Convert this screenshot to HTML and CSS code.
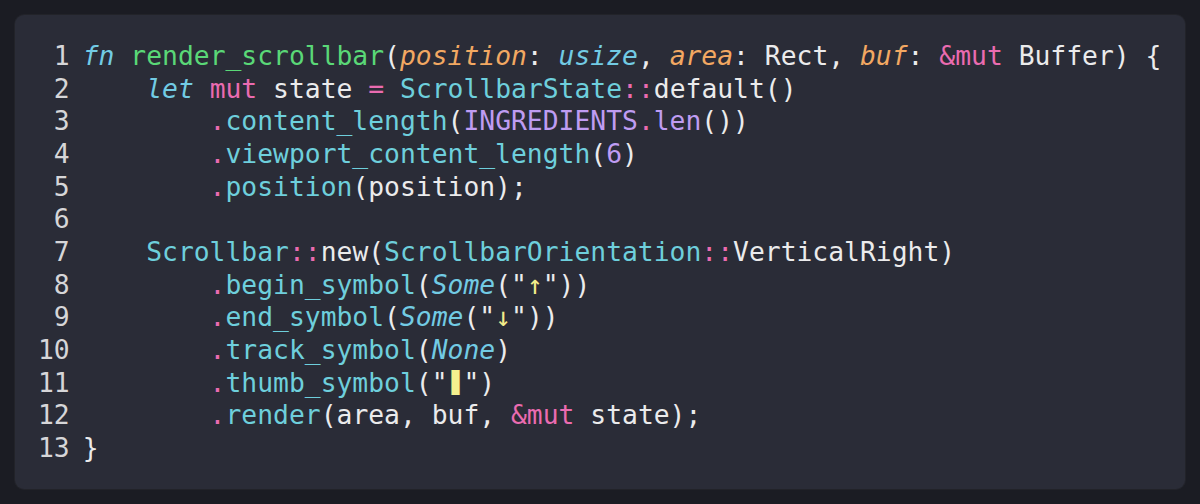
FILE: index.html
```html
<!DOCTYPE html>
<html>
<head>
<meta charset="utf-8">
<link rel="stylesheet" href="styles.css">
</head>
<body>
<div class="card">
<pre class="gutter">1
2
3
4
5
6
7
8
9
10
11
12
13</pre>
<pre class="code"><span class="kw">fn</span> <span class="fnname">render_scrollbar</span>(<span class="param">position</span>: <span class="kw">usize</span>, <span class="param">area</span>: Rect, <span class="param">buf</span>: <span class="op">&amp;mut</span> Buffer) {
    <span class="kw">let</span> <span class="op">mut</span> state <span class="op">=</span> <span class="ty">ScrollbarState</span><span class="op">::</span>default()
        <span class="op">.</span><span class="ty">content_length</span>(<span class="const">INGREDIENTS</span><span class="op">.</span><span class="const">len</span>())
        <span class="op">.</span><span class="ty">viewport_content_length</span>(<span class="const">6</span>)
        <span class="op">.</span><span class="ty">position</span>(position);

    <span class="ty">Scrollbar</span><span class="op">::</span>new(<span class="ty">ScrollbarOrientation</span><span class="op">::</span>VerticalRight)
        <span class="op">.</span><span class="ty">begin_symbol</span>(<span class="kw">Some</span>("<span class="str">↑</span>"))
        <span class="op">.</span><span class="ty">end_symbol</span>(<span class="kw">Some</span>("<span class="str">↓</span>"))
        <span class="op">.</span><span class="ty">track_symbol</span>(<span class="kw">None</span>)
        <span class="op">.</span><span class="ty">thumb_symbol</span>("<span class="thumb">▌</span>")
        <span class="op">.</span><span class="ty">render</span>(area, buf, <span class="op">&amp;mut</span> state);
}</pre>
</div>
</body>
</html>
```
FILE: styles.css
```css
html, body {
  margin: 0;
  padding: 0;
  background: #1b1c23;
}

body {
  padding: 15px;
  box-sizing: border-box;
  width: 1200px;
  height: 504px;
}

.card {
  box-sizing: border-box;
  width: 1170px;
  height: 474px;
  background: #2a2c37;
  border-radius: 9px;
  box-shadow: 0 0 0 1px rgba(255, 255, 255, 0.03);
  padding: 25px 0 25px 23px;
  display: flex;
  gap: 13px;
}

.gutter, .code {
  margin: 0;
  font-family: "DejaVu Sans Mono", monospace;
  font-size: 26.35px;
  line-height: 32.65px;
}

.gutter {
  color: #d6d6d8;
  text-align: right;
  width: 2ch;
}

.code {
  color: #ebebec;
}

.kw {
  color: #72cbe4;
  font-style: italic;
}

.fnname {
  color: #5ad877;
}

.param {
  color: #f2a862;
  font-style: italic;
}

.op {
  color: #ea6bb0;
}

.ty {
  color: #6ecfdc;
}

.const {
  color: #bf9cf2;
}

.str {
  color: #f3ec8a;
}

.thumb {
  color: #f4f08e;
  display: inline-block;
  transform: translateX(4px) scaleY(0.8);
}
```
